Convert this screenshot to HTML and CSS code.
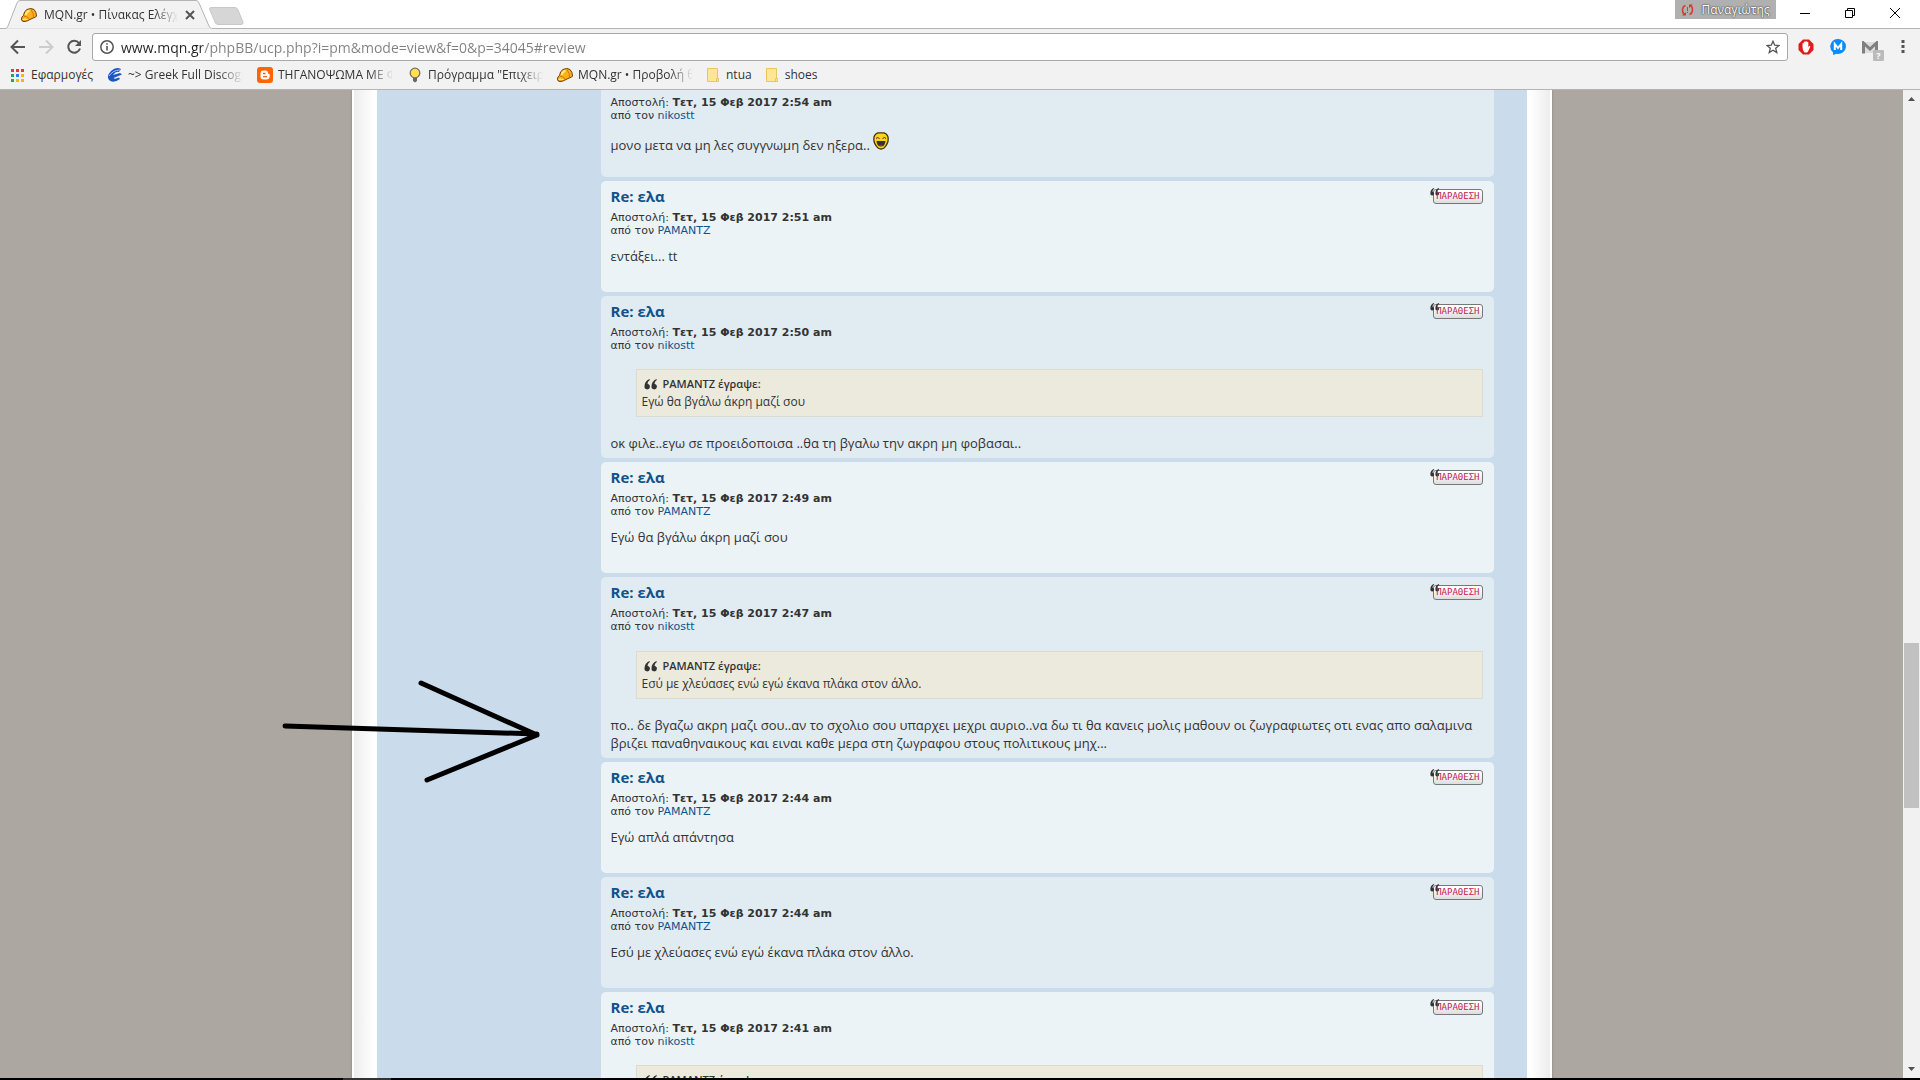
FILE: index.html
```html
<!DOCTYPE html>
<html lang="el">
<head>
<meta charset="utf-8">
<title>MQN.gr • Πίνακας Ελέγχου</title>
<link rel="stylesheet" href="styles.css">
</head>
<body>
<svg class="defs" aria-hidden="true">
  <symbol id="helmet" viewBox="0 0 16 16">
    <path d="M.5 12Q.5 9.500 2.500 8.500 3 4 6 2.500 10 .5 13 2.500 15.500 5 15.500 9 15 10.500 12 11L9 12.500Q6 14.500 3 14.500.5 14.500.5 12z" fill="#ffb01a" stroke="#6b3c00"/>
    <path d="M4.500 8Q5.500 4.500 8.500 3.500" fill="none" stroke="#ffe98a" stroke-width="2"/>
    <path d="M2.500 9Q6 9 8.500 12M10 3Q13 6 12.500 10.500" fill="none" stroke="#d97800"/>
    <path d="M1.500 12.500Q4 11.500 6.500 12.800" fill="none" stroke="#fff0a0"/>
  </symbol>
  <symbol id="folder" viewBox="0 0 12 14">
    <path d="M.5.5h10v9.500l1 .5v3H.5z" fill="#ffe694" stroke="#e8c65c"/><path d="M9.500 13.500V10.500h2" fill="none" stroke="#e8c65c"/>
  </symbol>
  <symbol id="marks" viewBox="0 0 14 11">
    <path d="M5.500 0Q.5 2 .5 7.500A2.700 2.700 0 1 0 3.500 5Q3.500 2.500 5.800 1zM12.500 0Q7.500 2 7.500 7.500A2.700 2.700 0 1 0 10.500 5Q10.500 2.500 12.800 1z" fill="#333"/>
  </symbol>
</svg>

<header class="chrome">
  <div class="tabstrip">
    <div class="tab">
      <svg class="tab-shape" viewBox="0 0 206 29"><path d="M0 29V28.500Q1 28.500 2 26L11 3Q12 .5 14 .5H190Q192 .5 193 3L203 26Q204 28.500 206 28.500V29z" fill="#f2f2f2" stroke="#b4b4b4"/><path d="M0 29h206" stroke="#f2f2f2" stroke-width="1"/></svg>
      <svg class="icon16"><use href="#helmet"/></svg>
      <span class="tab-title fade">MQN.gr • Πίνακας Ελέγχ</span>
      <button class="bare close-tab" aria-label="Κλείσιμο καρτέλας"><svg width="10" height="10" viewBox="0 0 10 10"><path d="M1 1l8 8M9 1l-8 8" stroke="#555" stroke-width="2"/></svg></button>
    </div>
    <button class="bare new-tab" aria-label="Νέα καρτέλα"><svg width="35" height="18" viewBox="0 0 35 18"><path d="M2 .5H26Q28 .5 29 3L34 15Q34.500 17.500 32 17.500H9Q7 17.500 6 15L.5 2Q.5.5 2 .5z" fill="#d6d6d6" stroke="#c8c8c8"/></svg></button>
    <div class="window-controls">
      <button class="profile"><svg width="13" height="12" viewBox="0 0 13 12"><path d="M4.500 1.500Q1.500 2.500 1.500 6T3.500 10.500M8.500 10.500Q11.500 9.500 11.500 6T9.500 1.500" fill="none" stroke="#d23c2e" stroke-width="1.500"/><path d="M1 11.500h4V8zM12 .5H8V4zM6 3h1v4H6zM6 8h1v1H6z" fill="#d23c2e"/></svg>Παναγιώτης</button>
      <button class="bare win" aria-label="Ελαχιστοποίηση"><svg width="10" height="10"><path d="M0 5.500h10" stroke="#000"/></svg></button>
      <button class="bare win" aria-label="Επαναφορά"><svg width="10" height="10"><path d="M.5 2.500h7v7h-7zM2.500 2V.5h7v7H8" fill="none" stroke="#000"/></svg></button>
      <button class="bare win" aria-label="Κλείσιμο"><svg width="10" height="10"><path d="M0 0l10 10M10 0L0 10" stroke="#000"/></svg></button>
    </div>
  </div>

  <div class="toolbar">
    <button class="bare nav" aria-label="Πίσω"><svg width="16" height="16" viewBox="0 0 16 16"><path d="M15 8H2M8 1.500L1.500 8 8 14.500" fill="none" stroke="#555" stroke-width="2"/></svg></button>
    <button class="bare nav" aria-label="Εμπρός"><svg width="16" height="16" viewBox="0 0 16 16"><path d="M1 8H14M8 1.500L14.500 8 8 14.500" fill="none" stroke="#ccc" stroke-width="2"/></svg></button>
    <button class="bare nav" aria-label="Ανανέωση"><svg width="16" height="16" viewBox="0 0 16 16"><path d="M13 4A6 6 0 1 0 14 9.500" fill="none" stroke="#555" stroke-width="2"/><path d="M15 1v6H9z" fill="#555"/></svg></button>
    <div class="omnibox">
      <svg width="14" height="14" viewBox="0 0 14 14"><circle cx="7" cy="7" r="6.200" fill="none" stroke="#555" stroke-width="1.500"/><path d="M6.200 6h1.600v4.500H6.200zM6.200 3.300h1.600v1.500H6.200z" fill="#555"/></svg>
      <input class="url" type="text" aria-label="Διεύθυνση" value="www.mqn.gr/phpBB/ucp.php?i=pm&amp;mode=view&amp;f=0&amp;p=34045#review">
      <button class="bare" aria-label="Προσθήκη σελιδοδείκτη"><svg width="14" height="14" viewBox="0 0 14 14"><path d="M7 1.200L8.700 5.200 13 5.500 9.700 8.300 10.800 12.600 7 10.300 3.200 12.600 4.300 8.300 1 5.500 5.300 5.200z" fill="none" stroke="#555" stroke-width="1.300"/></svg></button>
    </div>
    <div class="extensions">
      <button class="bare" aria-label="AdBlock"><svg width="16" height="16" viewBox="0 0 16 16"><path d="M5 .5h6L15.500 5v6L11 15.500H5L.5 11V5z" fill="#e01b1b"/><path d="M4.500 8V4.500q.7-.8 1.300 0V3q.8-.8 1.500 0V2.500q.8-.8 1.500 0V3q.8-.7 1.500.2V8l1.200-1.200q1 0 .8 1L10 12.500 9 13.500H6.500Q4.500 12 4.500 8z" fill="#fff"/></svg></button>
      <button class="bare" aria-label="Messenger"><svg width="16" height="16" viewBox="0 0 16 16"><path d="M8 0A7.700 7.500 0 1 1 6.500 14.800L3 16V13.200A7.700 7.500 0 0 1 8 0z" fill="#0a8cff"/><path d="M4.800 11V5L8 9l3.200-4V11" fill="none" stroke="#fff" stroke-width="2"/></svg></button>
      <button class="bare gmail" aria-label="Gmail"><svg width="16" height="13" viewBox="0 0 16 13"><path d="M0 1h16v11H0z" fill="#ddd"/><path d="M1.500 12.500V2L8 8l6.500-6v10.500" fill="none" stroke="#808080" stroke-width="3"/></svg><span class="count">?</span></button>
      <button class="bare" aria-label="Μενού"><svg width="4" height="14"><path d="M.5 0h3v3h-3zM.5 5h3v3h-3zM.5 10h3v3h-3z" fill="#555"/></svg></button>
    </div>
  </div>

  <nav class="bookmarks">
    <a href="#" class="apps"><svg width="13" height="13"><path d="M0 0h3v3H0zM5 0h3v3H5zM10 0h3v3h-3z" fill="#e8372c"/><path d="M0 5h3v3H0z" fill="#2f9e56"/><path d="M5 5h3v3H5z" fill="#2f7de8"/><path d="M10 5h3v3h-3zM5 10h3v3H5zM10 10h3v3h-3z" fill="#f9b214"/><path d="M0 10h3v3H0z" fill="#2f9e56"/></svg><span>Εφαρμογές</span></a>
    <a href="#"><svg class="icon16" viewBox="0 0 16 16"><path d="M14 2Q9-.5 4 4-1 9 2 13q4 4 11-1l-1-1.500Q8 12.500 6.500 11L15 7.500 13 6 6 8Q9 4 12 5z" fill="#1c56c4"/><path d="M2 9Q6 3 13 3" fill="none" stroke="#9cc4f5"/></svg><span class="fade">~&gt; Greek Full Discogr</span></a>
    <a href="#"><svg class="icon16" viewBox="0 0 16 16"><rect width="16" height="16" rx="3" fill="#ff6600"/><path d="M6.500 3.500H8.500Q11 3.500 11 6q0 1 1 1t.7 1V9.500Q12.500 12.500 9.500 12.500H6.500Q3.500 12.500 3.500 9.500V6.500Q3.500 3.500 6.500 3.500z" fill="#fff"/><path d="M6 6.500h2.500M6 9.700h4" stroke="#ff6600" stroke-width="1.300"/></svg><span class="fade">ΤΗΓΑΝΟΨΩΜΑ ΜΕ Φ</span></a>
    <a href="#"><svg class="icon16" viewBox="0 0 16 16"><circle cx="8" cy="6" r="4.800" fill="#ffe052" stroke="#77705a" stroke-width="1.300"/><path d="M6 11h4v3L8 15.500 6 14z" fill="#666"/></svg><span class="fade">Πρόγραμμα "Επιχειρη</span></a>
    <a href="#"><svg class="icon16"><use href="#helmet"/></svg><span class="fade">MQN.gr • Προβολή θε</span></a>
    <a href="#" class="folder"><svg width="12" height="14"><use href="#folder"/></svg><span>ntua</span></a>
    <a href="#" class="folder"><svg width="12" height="14"><use href="#folder"/></svg><span>shoes</span></a>
  </nav>
</header>

<div class="viewport">
  <div class="scrolled">
    <div class="wrap">
      <main class="panel">
        <article class="post alt cut">
          <p class="meta">Αποστολή: <strong>Τετ, 15 Φεβ 2017 2:54 am</strong><br>από τον <a href="#">nikostt</a></p>
          <p class="text">μονο μετα να μη λες συγγνωμη δεν ηξερα.. <svg class="smiley" width="16" height="18" viewBox="0 0 16 18"><path d="M5 .8h6Q15.200 2 15.200 7 15.200 12 11 16 8 18 5 16 .8 12 .8 7 .8 2 5 .8z" fill="#ffd21c" stroke="#463200" stroke-width="1.300"/><path d="M3 6.500Q4.500 4.500 6.500 6.500M9.500 6.500Q11.500 4.500 13 6.500" fill="none" stroke="#333"/><path d="M3.500 9h9Q12 14.500 8 14.500T3.500 9z" fill="#333"/><path d="M6 13.500q2-1.500 4 0-2 1.500-4 0z" fill="#e02020"/></svg></p>
        </article>
        <article class="post">
          <button class="quote-btn"><svg width="10" height="8"><use href="#marks"/></svg>ΠΑΡΑΘΕΣΗ</button>
          <h3><a href="#">Re: ελα</a></h3>
          <p class="meta">Αποστολή: <strong>Τετ, 15 Φεβ 2017 2:51 am</strong><br>από τον <a href="#">PAMANTZ</a></p>
          <p class="text">εντάξει... tt</p>
        </article>
        <article class="post alt">
          <button class="quote-btn"><svg width="10" height="8"><use href="#marks"/></svg>ΠΑΡΑΘΕΣΗ</button>
          <h3><a href="#">Re: ελα</a></h3>
          <p class="meta">Αποστολή: <strong>Τετ, 15 Φεβ 2017 2:50 am</strong><br>από τον <a href="#">nikostt</a></p>
          <blockquote><cite><svg width="14" height="11"><use href="#marks"/></svg>PAMANTZ έγραψε:</cite>Εγώ θα βγάλω άκρη μαζί σου</blockquote>
          <p class="text">οκ φιλε..εγω σε προειδοποισα ..θα τη βγαλω την ακρη μη φοβασαι..</p>
        </article>
        <article class="post">
          <button class="quote-btn"><svg width="10" height="8"><use href="#marks"/></svg>ΠΑΡΑΘΕΣΗ</button>
          <h3><a href="#">Re: ελα</a></h3>
          <p class="meta">Αποστολή: <strong>Τετ, 15 Φεβ 2017 2:49 am</strong><br>από τον <a href="#">PAMANTZ</a></p>
          <p class="text">Εγώ θα βγάλω άκρη μαζί σου</p>
        </article>
        <article class="post alt long">
          <button class="quote-btn"><svg width="10" height="8"><use href="#marks"/></svg>ΠΑΡΑΘΕΣΗ</button>
          <h3><a href="#">Re: ελα</a></h3>
          <p class="meta">Αποστολή: <strong>Τετ, 15 Φεβ 2017 2:47 am</strong><br>από τον <a href="#">nikostt</a></p>
          <blockquote><cite><svg width="14" height="11"><use href="#marks"/></svg>PAMANTZ έγραψε:</cite>Εσύ με χλεύασες ενώ εγώ έκανα πλάκα στον άλλο.</blockquote>
          <p class="text">πο.. δε βγαζω ακρη μαζι σου..αν το σχολιο σου υπαρχει μεχρι αυριο..να δω τι θα κανεις μολις μαθουν οι ζωγραφιωτες οτι ενας απο σαλαμινα βριζει παναθηναικους και ειναι καθε μερα στη ζωγραφου στους πολιτικους μηχ...</p>
        </article>
        <article class="post">
          <button class="quote-btn"><svg width="10" height="8"><use href="#marks"/></svg>ΠΑΡΑΘΕΣΗ</button>
          <h3><a href="#">Re: ελα</a></h3>
          <p class="meta">Αποστολή: <strong>Τετ, 15 Φεβ 2017 2:44 am</strong><br>από τον <a href="#">PAMANTZ</a></p>
          <p class="text">Εγώ απλά απάντησα</p>
        </article>
        <article class="post alt">
          <button class="quote-btn"><svg width="10" height="8"><use href="#marks"/></svg>ΠΑΡΑΘΕΣΗ</button>
          <h3><a href="#">Re: ελα</a></h3>
          <p class="meta">Αποστολή: <strong>Τετ, 15 Φεβ 2017 2:44 am</strong><br>από τον <a href="#">PAMANTZ</a></p>
          <p class="text">Εσύ με χλεύασες ενώ εγώ έκανα πλάκα στον άλλο.</p>
        </article>
        <article class="post">
          <button class="quote-btn"><svg width="10" height="8"><use href="#marks"/></svg>ΠΑΡΑΘΕΣΗ</button>
          <h3><a href="#">Re: ελα</a></h3>
          <p class="meta">Αποστολή: <strong>Τετ, 15 Φεβ 2017 2:41 am</strong><br>από τον <a href="#">nikostt</a></p>
          <blockquote><cite><svg width="14" height="11"><use href="#marks"/></svg>PAMANTZ έγραψε:</cite></blockquote>
        </article>
      </main>
    </div>
  </div>
  <div class="scrollbar">
    <svg width="7" height="4"><path d="M0 4L3.500 0 7 4z" fill="#505050"/></svg>
    <div class="track"><div class="thumb"></div></div>
    <svg width="7" height="4"><path d="M0 0h7L3.500 4z" fill="#505050"/></svg>
  </div>
</div>
<footer class="taskbar"><div class="running"></div></footer>

<svg class="arrow" width="262" height="106" viewBox="0 0 262 106" aria-hidden="true"><path d="M5 48L257 56M141 5L257 57M147 102L257 57" fill="none" stroke="#000" stroke-width="5" stroke-linecap="round"/></svg>
</body>
</html>
```
FILE: styles.css
```css
* { box-sizing: border-box; }
body {
  margin: 0;
  height: 100vh;
  display: flex;
  flex-direction: column;
  overflow: hidden;
  position: relative;
  background: #fff;
  font-family: "Open Sans", "Noto Sans", sans-serif;
  font-size: 12px;
  color: #333;
}
.defs { position: absolute; width: 0; height: 0; }
svg { display: block; flex: none; }
a { color: #105289; text-decoration: none; }
button { font: inherit; cursor: pointer; }
.bare { border: 0; padding: 0; background: none; display: flex; align-items: center; justify-content: center; }
.icon16 { width: 16px; height: 16px; }
.fade {
  overflow: hidden;
  white-space: nowrap;
  -webkit-mask-image: linear-gradient(90deg, #000 calc(100% - 24px), transparent);
  mask-image: linear-gradient(90deg, #000 calc(100% - 24px), transparent);
}

/* Browser frame */
.chrome { flex: none; background: #f2f2f2; border-bottom: 1px solid #b4b4b4; }
.tabstrip { display: flex; height: 29px; background: #fff; border-bottom: 1px solid #b4b4b4; padding-left: 6px; }
.tab { position: relative; width: 206px; height: 29px; display: flex; align-items: center; padding: 0 17px 0 15px; gap: 7px; }
.tab-shape { position: absolute; inset: 0; width: 206px; height: 29px; }
.tab .icon16, .tab-title, .close-tab { position: relative; }
.tab-title { width: 134px; color: #333; }
.new-tab { height: 18px; margin-top: 7px; margin-left: -3px; }
.window-controls { margin-left: auto; display: flex; padding-right: 3px; }
.profile {
  width: 101px; height: 19px; margin-right: 6px; padding: 0;
  display: flex; align-items: center; justify-content: center; gap: 7px;
  border: 0; background: #b0b0b0; color: #fff; line-height: 19px;
  text-shadow: 0 0 2px #333, 0 0 1px #333;
}
.win { width: 45px; height: 26px; }

.toolbar { display: flex; height: 36px; padding: 4px 8px 4px 4px; }
.nav { width: 28px; height: 28px; }
.omnibox {
  flex: 1; min-width: 0; height: 28px; margin-left: 4px; padding: 0 7px;
  display: flex; align-items: center; gap: 7px;
  background: #fff; border: 1px solid #a9a9a9; border-radius: 3px;
}
.url {
  flex: 1; min-width: 0; border: 0; padding: 0; outline: 0; height: 24px;
  font: 14px "Open Sans", "Noto Sans", sans-serif;
  color: transparent;
  background: linear-gradient(90deg, #222 82px, #808080 82px);
  -webkit-background-clip: text; background-clip: text;
}
.extensions { display: flex; align-items: center; gap: 16px; margin-left: 10px; }
.extensions .gmail { position: relative; }
.extensions > :last-child { width: 18px; }
.count {
  position: absolute; left: 11px; top: 9px; width: 11px; height: 11px;
  background: #bbb; color: #fff; font: bold 9px/11px "Open Sans", sans-serif; border-radius: 1px;
}

.bookmarks { display: flex; align-items: center; gap: 14px; height: 24px; padding: 0 0 4px 11px; }
.bookmarks a { display: flex; align-items: center; gap: 5px; color: #333; line-height: 18px; white-space: nowrap; }
.bookmarks .fade { width: 115px; }
.bookmarks .apps { gap: 7px; width: 82px; }
.bookmarks .folder { gap: 7px; }

/* Forum page */
.viewport { flex: 1; min-height: 0; display: flex; background: #aca7a0; }
.scrolled { flex: 1; min-width: 0; overflow: hidden; }
.wrap {
  max-width: 1200px; min-height: 100%; margin: 0 auto; padding: 0 25px;
  background: linear-gradient(90deg, #fff 2px, #ededed 2px, #fff 22px, #fff calc(100% - 22px), #ededed calc(100% - 2px), #fff calc(100% - 2px));
  box-shadow: 0 0 2px #807c76;
}
.panel { display: flex; flex-direction: column; gap: 4px; padding: 0 33px 0 224px; background: #cadceb; }
.post { min-height: 111px; padding: 6px 11px 6px 10px; border-radius: 5px; background: #ecf3f7; }
.post.alt { background: #e1ebf2; }
.post.cut { min-height: 87px; border-radius: 0 0 5px 5px; }
.post h3 { margin: 0 0 6px; font: bold 15px/18px "Open Sans", "Noto Sans", sans-serif; }
.meta { margin: 0; font: 11px/13px "DejaVu Sans", sans-serif; }
.text { margin: 10px 0 0; font-size: 13px; line-height: 18px; }
.smiley { display: inline-block; }
blockquote {
  margin: 17px 0 17px 25px; height: 48px; padding: 5px;
  background: #ebeadd; border: 1px solid #dbdbce;
  font-size: 12px; line-height: 18px;
}
.long blockquote { margin-top: 18px; }
blockquote cite { display: flex; align-items: center; gap: 5px; padding-left: 2px; font-style: normal; font-weight: 600; font-size: 11px; }
.quote-btn {
  float: right; position: relative; isolation: isolate; width: 50px; height: 15px; margin-top: 2px; padding: 0 2px 0 0;
  border: 1px solid #777; border-radius: 3px;
  background: linear-gradient(#fff 20%, #ddd);
  font: 9px/13px "DejaVu Sans Mono", monospace; color: #bf2552; text-align: right;
}
.quote-btn svg { position: absolute; z-index: -1; left: -4px; top: -2px; }

.scrollbar { width: 17px; display: flex; flex-direction: column; align-items: center; gap: 7px; padding: 7px 0; background: #f1f1f1; }
.track { flex: 1; align-self: stretch; padding: 0 1px; }
.thumb { height: 165px; margin-top: 535px; background: #c1c1c1; }

.taskbar { flex: none; height: 2px; background: #000; }
.running { width: 48px; height: 2px; margin-left: 343px; background: #333; }

/* Hand-drawn pointer over the page */
.arrow { position: absolute; left: 280px; top: 678px; }
```
